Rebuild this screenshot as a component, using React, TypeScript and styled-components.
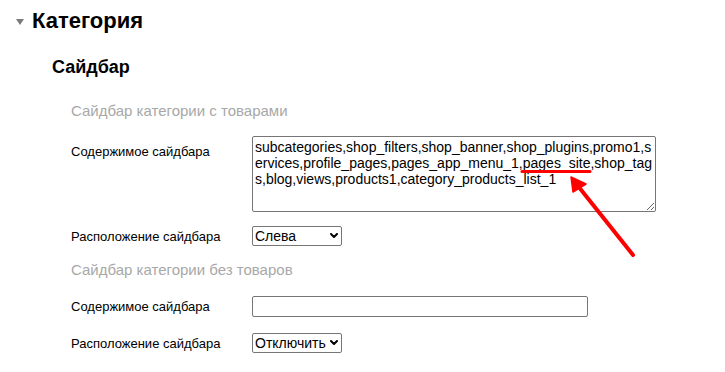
import styled, { createGlobalStyle } from 'styled-components';

const GlobalStyle = createGlobalStyle`
  body {
    margin: 0;
    background: #ffffff;
    font-family: "Liberation Sans", Arial, sans-serif;
    color: #000;
  }
`;

const Page = styled.div`
  position: relative;
  width: 725px;
  height: 372px;
  overflow: hidden;
  padding-top: 8px;
  box-sizing: border-box;
`;

const Header = styled.div`
  display: flex;
  align-items: center;
  gap: 8px;
  padding-left: 16px;
`;

const Caret = styled.span`
  width: 0;
  height: 0;
  border-left: 4px solid transparent;
  border-right: 4px solid transparent;
  border-top: 6px solid #7a7a7a;
  margin-top: 2px;
`;

const Title = styled.h2`
  margin: 0;
  font-size: 22px;
  line-height: 25px;
  font-weight: bold;
`;

const Section = styled.div`
  padding-left: 52px;
  margin-top: 24px;
`;

const SectionTitle = styled.h3`
  margin: 0;
  font-size: 18px;
  line-height: 21px;
  font-weight: bold;
`;

const Group = styled.div`
  padding-left: 19px;
`;

const GroupTitle = styled.div<{ $top: number; $bottom: number }>`
  margin-top: ${(p) => p.$top}px;
  margin-bottom: ${(p) => p.$bottom}px;
  font-size: 15px;
  line-height: 17px;
  color: #a8a8a8;
`;

const Row = styled.div<{ $alignTop?: boolean; $gap?: number }>`
  display: grid;
  grid-template-columns: 181px auto;
  align-items: ${(p) => (p.$alignTop ? 'start' : 'center')};
  margin-top: ${(p) => p.$gap ?? 0}px;
`;

const Label = styled.label<{ $pad?: number }>`
  font-size: 13px;
  line-height: 15px;
  padding-top: ${(p) => p.$pad ?? 0}px;
`;

const TextArea = styled.textarea`
  width: 404px;
  height: 76px;
  box-sizing: border-box;
  border: 1px solid #767676;
  border-radius: 2px;
  padding: 2px;
  font-family: "Liberation Sans", Arial, sans-serif;
  font-size: 14px;
  line-height: 16px;
  color: #000;
  resize: both;
  margin: 0;
  display: block;
`;

const TextInput = styled.input`
  width: 336px;
  height: 21px;
  box-sizing: border-box;
  border: 1px solid #767676;
  border-radius: 2px;
  padding: 1px 2px;
  margin: 0;
  font-family: "Liberation Sans", Arial, sans-serif;
  font-size: 14px;
  display: block;
`;

const SelectWrap = styled.div`
  position: relative;
  width: 90px;
  height: 20px;
`;

const Select = styled.select`
  appearance: none;
  -webkit-appearance: none;
  width: 90px;
  height: 20px;
  box-sizing: border-box;
  border: 1px solid #767676;
  border-radius: 2px;
  margin: 0;
  padding: 0 14px 0 2px;
  font-family: "Liberation Sans", Arial, sans-serif;
  font-size: 14px;
  line-height: 18px;
  color: #000;
  background: #fff;
  display: block;
`;

const Chevron = styled.svg`
  position: absolute;
  right: 4px;
  top: 7px;
  pointer-events: none;
`;

const Annotation = styled.svg`
  position: absolute;
  left: 0;
  top: 0;
  pointer-events: none;
`;

const sidebarValue =
  'subcategories,shop_filters,shop_banner,shop_plugins,promo1,services,profile_pages,pages_app_menu_1,pages_site,shop_tags,blog,views,products1,category_products_list_1';

const positions = [
  { value: 'left', label: 'Слева' },
  { value: 'right', label: 'Справа' },
  { value: 'off', label: 'Отключить' },
];

const PositionSelect = ({ value }: { value: string }) => (
  <SelectWrap>
    <Select defaultValue={value}>
      {positions.map((o) => (
        <option key={o.value} value={o.value}>
          {o.label}
        </option>
      ))}
    </Select>
    <Chevron width="8" height="6" viewBox="0 0 8 6">
      <path d="M1 1 L4 4 L7 1" fill="none" stroke="#000" strokeWidth="2" strokeLinecap="round" strokeLinejoin="round" />
    </Chevron>
  </SelectWrap>
);

export default function App() {
  return (
    <>
      <GlobalStyle />
      <Page>
        <Header>
          <Caret />
          <Title>Категория</Title>
        </Header>
        <Section>
          <SectionTitle>Сайдбар</SectionTitle>
          <Group>
            <GroupTitle $top={24} $bottom={17}>Сайдбар категории с товарами</GroupTitle>
            <Row $alignTop>
              <Label $pad={8}>Содержимое сайдбара</Label>
              <TextArea defaultValue={sidebarValue} spellCheck={false} />
            </Row>
            <Row $gap={14}>
              <Label>Расположение сайдбара</Label>
              <PositionSelect value="left" />
            </Row>
            <GroupTitle $top={15} $bottom={18}>Сайдбар категории без товаров</GroupTitle>
            <Row>
              <Label>Содержимое сайдбара</Label>
              <TextInput defaultValue="" />
            </Row>
            <Row $gap={16}>
              <Label>Расположение сайдбара</Label>
              <PositionSelect value="off" />
            </Row>
          </Group>
        </Section>
        <Annotation width="725" height="372" viewBox="0 0 725 372">
          <line x1="522" y1="171.5" x2="590" y2="171.5" stroke="#ff0000" strokeWidth="3" strokeLinecap="round" />
          <line x1="633" y1="255" x2="578" y2="186" stroke="#ff0000" strokeWidth="4" strokeLinecap="round" />
          <polygon points="571,177 573,192 586,184" fill="#ff0000" stroke="#ff0000" strokeWidth="1.5" strokeLinejoin="round" />
        </Annotation>
      </Page>
    </>
  );
}
